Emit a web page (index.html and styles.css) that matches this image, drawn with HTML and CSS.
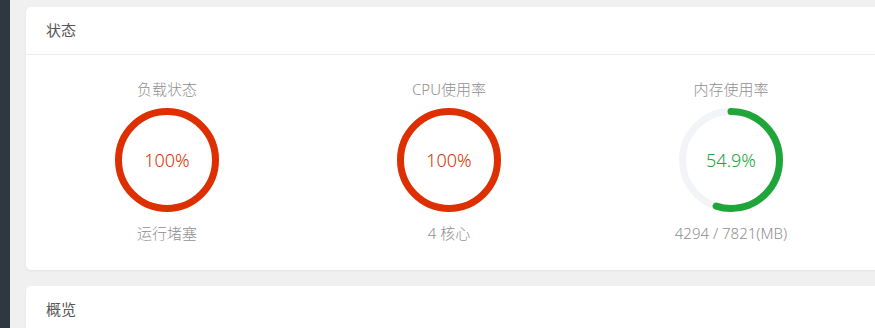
FILE: index.html
```html
<!DOCTYPE html>
<html lang="zh-CN">
<head>
<meta charset="utf-8">
<title>状态</title>
<link rel="stylesheet" href="styles.css">
</head>
<body>
<div class="layout">
  <aside class="sidebar"></aside>
  <main class="main">
    <section class="card">
      <div class="card-header">状态</div>
      <div class="card-body">
        <div class="stat">
          <div class="stat-title">负载状态</div>
          <div class="ring">
            <svg viewBox="0 0 104 104" width="104" height="104">
              <circle cx="52" cy="52" r="48.5" class="track"/>
              <circle cx="52" cy="52" r="48.5" class="arc red" stroke-dasharray="304.7 304.7" transform="rotate(-90 52 52)"/>
            </svg>
            <span class="ring-val red-text">100%</span>
          </div>
          <div class="stat-foot">运行堵塞</div>
        </div>
        <div class="stat">
          <div class="stat-title">CPU使用率</div>
          <div class="ring">
            <svg viewBox="0 0 104 104" width="104" height="104">
              <circle cx="52" cy="52" r="48.5" class="track"/>
              <circle cx="52" cy="52" r="48.5" class="arc red" stroke-dasharray="304.7 304.7" transform="rotate(-90 52 52)"/>
            </svg>
            <span class="ring-val red-text">100%</span>
          </div>
          <div class="stat-foot">4 核心</div>
        </div>
        <div class="stat">
          <div class="stat-title">内存使用率</div>
          <div class="ring">
            <svg viewBox="0 0 104 104" width="104" height="104">
              <circle cx="52" cy="52" r="48.5" class="track"/>
              <circle cx="52" cy="52" r="48.5" class="arc green round" stroke-dasharray="167.3 304.7" transform="rotate(-90 52 52)"/>
            </svg>
            <span class="ring-val green-text">54.9%</span>
          </div>
          <div class="stat-foot">4294 / 7821(MB)</div>
        </div>
      </div>
    </section>
    <section class="card card-second">
      <div class="card-header">概览</div>
    </section>
  </main>
</div>
</body>
</html>
```

FILE: styles.css
```css
html, body {
  margin: 0;
  padding: 0;
  height: 100%;
}
body {
  background: #f0f0f0;
  font-family: "Noto Sans", "Noto Sans CJK SC", sans-serif;
  overflow: hidden;
}
.layout {
  display: flex;
  height: 328px;
}
.sidebar {
  width: 10px;
  flex: none;
  background: #2f3740;
}
.main {
  flex: 1;
  padding: 7px 0 0 16px;
  overflow: hidden;
}
.card {
  width: 1128px;
  background: #fff;
  border-radius: 5px;
  box-shadow: 0 1px 3px rgba(0, 0, 0, 0.05);
}
.card-second {
  margin-top: 16px;
  height: 60px;
}
.card-header {
  height: 47px;
  line-height: 47px;
  padding-left: 20px;
  font-size: 15px;
  color: #555;
  border-bottom: 1px solid #ececec;
}
.card-second .card-header {
  border-bottom: none;
}
.card-body {
  display: flex;
  padding: 24px 0 27px;
}
.stat {
  width: 282px;
  display: flex;
  flex-direction: column;
  align-items: center;
}
.stat-title,
.stat-foot {
  font-size: 15px;
  font-weight: 300;
  line-height: 20px;
  color: #8f8f8f;
}
.ring {
  position: relative;
  width: 104px;
  height: 104px;
  margin: 9px 0 11px;
}
.ring svg {
  display: block;
}
.track {
  fill: none;
  stroke: #f3f4f8;
  stroke-width: 7;
}
.arc {
  fill: none;
  stroke-width: 7;
}
.arc.red {
  stroke: #dd2f00;
}
.arc.green {
  stroke: #20a53a;
}
.arc.round {
  stroke-linecap: round;
}
.ring-val {
  position: absolute;
  inset: 0;
  display: flex;
  align-items: center;
  justify-content: center;
  font-size: 18px;
  font-weight: 300;
}
.red-text {
  color: #dd2f00;
}
.green-text {
  color: #20a53a;
}
```
